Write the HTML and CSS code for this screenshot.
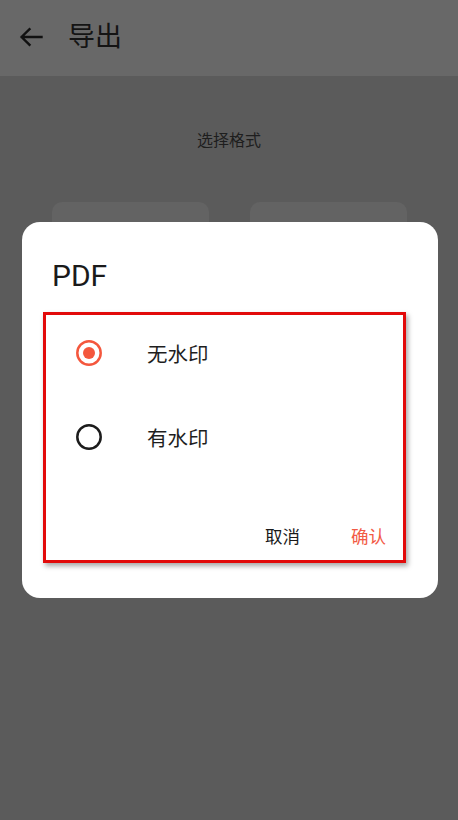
FILE: index.html
```html
<!DOCTYPE html>
<html lang="zh-CN">
<head>
<meta charset="utf-8">
<link rel="stylesheet" href="styles.css">
</head>
<body>
<div class="page">
  <header class="topbar">
    <svg class="back" width="24" height="20" viewBox="0 0 24 20"><path d="M22.5 10H3 M10.5 2.2 L2.6 10 L10.5 17.8" fill="none" stroke="#111" stroke-width="2.4" stroke-linecap="square"/></svg>
    <span class="title">导出</span>
  </header>
  <main class="content">
    <div class="subtitle">选择格式</div>
    <div class="cards">
      <div class="card"></div>
      <div class="card"></div>
    </div>
  </main>
</div>

<div class="dialog">
  <div class="dialog-title">PDF</div>
  <div class="highlight">
    <div class="options">
      <div class="option">
        <svg class="radio" width="26" height="26" viewBox="0 0 26 26"><circle cx="13" cy="13" r="11.7" fill="none" stroke="#f4573d" stroke-width="2.5"/><circle cx="13" cy="13" r="6" fill="#f4573d"/></svg>
        <span class="label">无水印</span>
      </div>
      <div class="option">
        <svg class="radio" width="26" height="26" viewBox="0 0 26 26"><circle cx="13" cy="13" r="11.7" fill="none" stroke="#1c1c1c" stroke-width="2.5"/></svg>
        <span class="label">有水印</span>
      </div>
    </div>
    <div class="actions">
      <span class="btn">取消</span>
      <span class="btn primary">确认</span>
    </div>
  </div>
</div>
</body>
</html>
```
FILE: styles.css
```css
html, body {
  margin: 0;
  padding: 0;
}
body {
  width: 458px;
  height: 820px;
  overflow: hidden;
  font-family: Roboto, "Noto Sans CJK SC", sans-serif;
  background: #5b5b5b;
}
.page {
  display: flex;
  flex-direction: column;
  height: 820px;
}
.topbar {
  height: 76px;
  background: #686868;
  display: flex;
  align-items: center;
  padding-left: 19px;
  box-sizing: border-box;
}
.back {
  display: block;
  margin-top: -3px;
}
.title {
  margin-left: 25px;
  font-family: "Noto Sans CJK SC", sans-serif;
  font-size: 27px;
  line-height: 36px;
  color: #141414;
  margin-top: -6px;
}
.content {
  flex: 1;
  background: #5b5b5b;
  display: flex;
  flex-direction: column;
  align-items: center;
}
.subtitle {
  margin-top: 51px;
  font-family: "Noto Sans CJK SC", sans-serif;
  font-size: 16px;
  line-height: 24px;
  color: #1e1e1e;
}
.cards {
  margin-top: 51px;
  display: flex;
  gap: 41px;
}
.card {
  width: 157px;
  height: 120px;
  border-radius: 10px;
  background: #636363;
}
.dialog {
  position: absolute;
  left: 22px;
  top: 222px;
  width: 416px;
  box-sizing: border-box;
  padding: 36px 32px 35px 21px;
  background: #fff;
  border-radius: 18px;
}
.dialog-title {
  font-family: Roboto, sans-serif;
  font-size: 30px;
  line-height: 36px;
  color: #1a1a1a;
  padding-left: 9px;
}
.highlight {
  margin-top: 18px;
  border: 3px solid #e20a0a;
  box-shadow: 2px 3px 5px rgba(0, 0, 0, 0.35);
  height: 251px;
  box-sizing: border-box;
  display: flex;
  flex-direction: column;
}
.options {
  display: flex;
  flex-direction: column;
  gap: 8px;
}
.option {
  height: 76px;
  display: flex;
  align-items: center;
  padding-left: 30px;
}
.radio {
  display: block;
  flex: none;
}
.label {
  margin-left: 45px;
  font-family: "Noto Sans CJK SC", sans-serif;
  font-size: 20.5px;
  line-height: 28px;
  color: #1e1e1e;
}
.actions {
  margin-top: 37px;
  height: 48px;
  display: flex;
  align-items: center;
  justify-content: flex-end;
  padding-right: 17px;
  gap: 51px;
}
.btn {
  font-family: "Noto Sans CJK SC", sans-serif;
  font-size: 17.5px;
  line-height: 24px;
  color: #1a1a1a;
}
.btn.primary {
  color: #f25a45;
}
```
